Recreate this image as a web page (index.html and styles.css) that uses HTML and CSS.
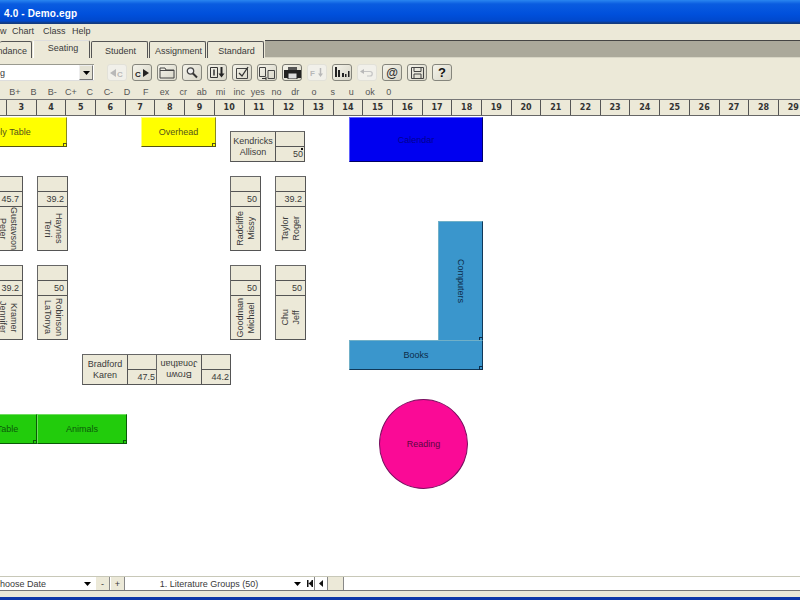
FILE: index.html
```html
<!DOCTYPE html>
<html lang="en">
<head>
<meta charset="utf-8">
<title>Demo.egp</title>
<link rel="stylesheet" href="styles.css">
</head>
<body>
<div class="app">
  <header class="titlebar"><span class="title">4.0 - Demo.egp</span></header>
  <nav class="menubar"><span class="m-view">w</span><span class="m-chart">Chart</span><span class="m-class">Class</span><span class="m-help">Help</span></nav>
  <div class="tabs">
    <span class="tab tab-first">ndance</span>
    <span class="tab tab-active">Seating</span>
    <span class="tab">Student</span>
    <span class="tab">Assignment</span>
    <span class="tab">Standard</span>
    <span class="tabfill"></span>
  </div>
  <div class="toolbar">
    <div class="combo combo-top"><span class="combo-text">g</span><span class="drop"><svg width="7" height="4" viewBox="0 0 7 4"><path d="M0 0h7L3.500 4z"/></svg></span></div>
    <div class="tools">
      <button class="tool off"><svg width="16" height="10" viewBox="0 0 16 10"><path d="M1 5l6-4v8z" fill="#b8b8b8"/><text x="8" y="8.500" class="ic-t ic-off">C</text></svg></button>
      <button class="tool"><svg width="16" height="10" viewBox="0 0 16 10"><text x="1" y="8.500" class="ic-t">C</text><path d="M9 1l6 4-6 4z" fill="#222"/></svg></button>
      <button class="tool"><svg width="16" height="13" viewBox="0 0 16 13"><path d="M1 12V2h5l1 2h8v8z" fill="none" stroke="#444"/><path d="M1 4.500h14" stroke="#444"/></svg></button>
      <button class="tool"><svg width="14" height="13" viewBox="0 0 14 13"><circle cx="5.500" cy="5" r="3.200" fill="#eee" stroke="#444" stroke-width="1.300"/><path d="M8 7.500l4 4" stroke="#333" stroke-width="2"/></svg></button>
      <button class="tool"><svg width="16" height="13" viewBox="0 0 16 13"><path d="M1.500 1.500h7v10h-7z" fill="none" stroke="#333"/><path d="M5 3.500v6" stroke="#333" stroke-width="1.500"/><path d="M12.500 1v7" stroke="#222" stroke-width="2"/><path d="M9.500 7.500h6l-3 4z" fill="#222"/></svg></button>
      <button class="tool"><svg width="15" height="14" viewBox="0 0 15 14"><path d="M1.500 2.500h11v10h-11z" fill="none" stroke="#444"/><path d="M4 7l3 3 6-9" fill="none" stroke="#333" stroke-width="1.300"/></svg></button>
      <button class="tool"><svg width="18" height="14" viewBox="0 0 18 14"><path d="M1.500 1.500h6v9h-6zM10 4.500h6.500v8H10z" fill="none" stroke="#444"/><path d="M4 12.500h4M8 11v3" stroke="#333"/></svg></button>
      <button class="tool strong"><svg width="17" height="12" viewBox="0 0 17 12"><path d="M4 0h9v3H4z" fill="#555"/><path d="M0 3h17v8H0z" fill="#222"/><path d="M4 6h9v6H4z" fill="#ddd" stroke="#222"/></svg></button>
      <button class="tool off"><svg width="14" height="11" viewBox="0 0 14 11"><text x="0" y="9" class="ic-t ic-off">F</text><path d="M10.500 1v6" stroke="#b8b8b8" stroke-width="1.500"/><path d="M8 6.500h5L10.500 10z" fill="#b8b8b8"/></svg></button>
      <button class="tool"><svg width="16" height="11" viewBox="0 0 16 11"><path d="M1 0h2v10H1zM4 3h2v7H4zM8 6h2v4H8zM11 7h1.500v3H11zM14 4h1.500v6H14z" fill="#222"/></svg></button>
      <button class="tool off"><svg width="15" height="9" viewBox="0 0 15 9"><path d="M3 3.500h7c3 0 3 4.500 0 4.500H7" fill="none" stroke="#c4c4c4" stroke-width="1.200"/><path d="M0 3.500L4 1v5z" fill="#b8b8b8"/></svg></button>
      <button class="tool"><span class="glyph">@</span></button>
      <button class="tool"><svg width="15" height="14" viewBox="0 0 15 14"><path d="M1.500 1.500h12v11h-12z" fill="none" stroke="#444"/><path d="M4 1.500h7v4H4zM4 8h7v4.500H4z" fill="none" stroke="#444"/></svg></button>
      <button class="tool"><span class="glyph glyph-b">?</span></button>
    </div>
  </div>
  <div class="marks"><span>B+</span><span>B</span><span>B-</span><span>C+</span><span>C</span><span>C-</span><span>D</span><span>F</span><span>ex</span><span>cr</span><span>ab</span><span>mi</span><span>inc</span><span>yes</span><span>no</span><span>dr</span><span>o</span><span>s</span><span>u</span><span>ok</span><span>0</span></div>
  <div class="ruler"><span class="cell cell-first"></span><span class="cell">3</span><span class="cell">4</span><span class="cell">5</span><span class="cell">6</span><span class="cell">7</span><span class="cell">8</span><span class="cell">9</span><span class="cell">10</span><span class="cell">11</span><span class="cell">12</span><span class="cell">13</span><span class="cell">14</span><span class="cell">15</span><span class="cell">16</span><span class="cell">17</span><span class="cell">18</span><span class="cell">19</span><span class="cell">20</span><span class="cell">21</span><span class="cell">22</span><span class="cell">23</span><span class="cell">24</span><span class="cell">25</span><span class="cell">26</span><span class="cell">27</span><span class="cell">28</span><span class="cell">29</span></div>
  <main class="canvas">
    <div class="block yellow b-assembly"><span class="clip-r">ably Table</span><i class="grip"></i></div>
    <div class="block yellow b-overhead">Overhead<i class="grip"></i></div>
    <div class="block blue b-calendar">Calendar</div>
    <div class="block teal b-computers"><span class="v-down">Computers</span><i class="grip"></i></div>
    <div class="block teal b-books">Books<i class="grip"></i></div>
    <div class="block green b-table"><span class="clip-r">Table</span><i class="grip"></i></div>
    <div class="block green b-animals">Animals<i class="grip"></i></div>
    <div class="block pink b-reading">Reading</div>

    <div class="desk h d-kendricks"><div class="name">Kendricks<br>Allison</div><div class="side"><div class="blank"></div><div class="val">50<i class="dot"></i></div></div></div>
    <div class="desk h d-bradford"><div class="name">Bradford<br>Karen</div><div class="side"><div class="blank"></div><div class="val">47.5</div></div></div>
    <div class="desk h d-brown"><div class="name flip">Brown<br>Jonathan</div><div class="side"><div class="blank"></div><div class="val">44.2</div></div></div>

    <div class="desk v d-gustavson"><div class="blank"></div><div class="val">45.7</div><div class="name"><span class="v-down">Gustavson<br>Peter</span></div></div>
    <div class="desk v d-haynes"><div class="blank"></div><div class="val">39.2</div><div class="name"><span class="v-down">Haynes<br>Terri</span></div></div>
    <div class="desk v d-kramer"><div class="blank"></div><div class="val">39.2</div><div class="name"><span class="v-down">Kramer<br>Jennifer</span></div></div>
    <div class="desk v d-robinson"><div class="blank"></div><div class="val">50</div><div class="name"><span class="v-down">Robinson<br>LaTonya</span></div></div>
    <div class="desk v d-radcliffe"><div class="blank"></div><div class="val">50</div><div class="name"><span class="v-up">Radcliffe<br>Missy</span></div></div>
    <div class="desk v d-taylor"><div class="blank"></div><div class="val">39.2</div><div class="name"><span class="v-up">Taylor<br>Roger</span></div></div>
    <div class="desk v d-goodman"><div class="blank"></div><div class="val">50</div><div class="name"><span class="v-up">Goodman<br>Michael</span></div></div>
    <div class="desk v d-chu"><div class="blank"></div><div class="val">50</div><div class="name"><span class="v-up">Chu<br>Jeff</span></div></div>
  </main>
  <footer class="statusrow">
    <div class="combo combo-date"><span class="combo-text">hoose Date</span><span class="arrow"><svg width="7" height="4" viewBox="0 0 7 4"><path d="M0 0h7L3.500 4z"/></svg></span></div>
    <span class="step">-</span>
    <span class="step">+</span>
    <div class="combo combo-group"><span class="combo-text centered">1. Literature Groups (50)</span><span class="arrow"><svg width="7" height="4" viewBox="0 0 7 4"><path d="M0 0h7L3.500 4z"/></svg></span></div>
    <span class="nav nav-a"><svg width="6" height="7" viewBox="0 0 6 7"><path d="M0 0h1.500v7H0zM4.500 0H6v7H4.500zM1.500 3.500L4.500 1v5z"/></svg></span>
    <span class="nav nav-b"><svg width="4" height="7" viewBox="0 0 4 7"><path d="M4 0v7L0 3.500z"/></svg></span>
    <span class="nav nav-c"></span>
  </footer>
  <div class="bottomgap"></div>
  <div class="taskbar"></div>
</div>
</body>
</html>
```
FILE: styles.css
```css
* { box-sizing: border-box; }
html, body { margin: 0; padding: 0; }
body { width: 800px; height: 600px; overflow: hidden; font-family: "Liberation Sans", Arial, sans-serif; font-size: 9px; color: #3a3a3a; background: #ece9d8; }
.app { display: flex; flex-direction: column; width: 800px; height: 600px; overflow: hidden; }

.titlebar { height: 24px; flex: none; display: flex; align-items: center; padding: 3px 0 0 4px; background: linear-gradient(#2a86f0 0, #0a5ce0 4px, #0050dc 14px, #0048cc 21px, #123a80 23px); color: #fff; }
.title { font: bold 10px "Liberation Sans", sans-serif; letter-spacing: .15px; }

.menubar { height: 15px; flex: none; display: flex; align-items: center; padding-bottom: 2px; background: #ece9d8; }
.m-view { width: 12px; }
.m-chart { width: 31px; }
.m-class { width: 29px; }

.tabs { height: 19px; flex: none; display: flex; align-items: flex-end; background: #ece9d8; }
.tab { width: 57px; margin-right: 1px; height: 17px; display: flex; align-items: center; justify-content: center; border: 1px solid #555; border-bottom: 0; border-radius: 2px 2px 0 0; background: #ece9d8; padding: 1px 0 0 2px; }
.tab-first { width: 32px; justify-content: flex-end; padding-right: 4px; border-left: 0; }
.tab-active { height: 18px; border-left-color: #fff; border-top-color: #ddd; padding: 0 0 3px 3px; }
.tabfill { flex: 1; height: 18px; background: #aba99b; border-top: 1px solid #444; border-bottom: 1px solid #d8d6c6; }

.toolbar { height: 26px; flex: none; display: flex; align-items: center; padding-top: 3px; background: #ece9d8; }
.combo { display: flex; align-items: center; background: #fff; }
.combo-top { width: 94px; height: 17px; margin-right: 13px; border-top: 1px solid #9a9a90; border-bottom: 1px solid #ddd; }
.combo-text { flex: 1; white-space: nowrap; }
.drop { width: 14px; height: 15px; margin-right: 1px; display: flex; align-items: center; justify-content: center; background: #e4e2d4; border: 1px solid #777; border-top-color: #eee; border-left-color: #eee; }
.tools { display: flex; gap: 5px; }
.tool { width: 20px; height: 17px; padding: 0; display: flex; align-items: center; justify-content: center; background: linear-gradient(135deg, #f4f3ea, #d8d6c8); border: 1px solid #85857c; border-radius: 3px; color: #333; }
.tool.off { background: #f1f0ea; border-color: #e2e1d8; }
.tool.strong { border-color: #77776f; }
.ic-t { font: bold 8px "Liberation Sans", sans-serif; fill: #222; }
.ic-off { fill: #b8b8b8; }
.glyph { font: bold 12px "Liberation Sans", sans-serif; line-height: 1; }
.glyph-b { font-size: 13px; color: #111; }

.marks { height: 15px; flex: none; display: grid; grid-template-columns: repeat(21, 18.700px); padding-left: 5.600px; align-items: center; justify-items: center; background: #ece9d8; color: #555; }

.ruler { height: 17px; flex: none; display: flex; background: #ece9d8; border-top: 1px solid #777; border-bottom: 1px solid #666; overflow: hidden; }
.cell { width: 29.700px; flex: none; display: flex; align-items: center; justify-content: center; border-right: 1.500px solid #555; font: bold 8px "DejaVu Sans", sans-serif; color: #333; }
.cell-first { width: 7px; }

.canvas { flex: 1; min-height: 0; position: relative; background: #fff; overflow: hidden; }
.block { position: absolute; display: flex; align-items: center; justify-content: center; border: 1px solid; font-size: 9px; }
.yellow { background: #ffff00; border-color: #ffff80 #8a8a20 #555510 #ffff80; color: #55551a; }
.blue { background: #0000f0; border-color: #6060ff #000070 #000060 #6060ff; color: #000090; }
.teal { background: #3a96cc; border-color: #70b0c8 #103858 #103858 #70b0c8; color: #0d2c4a; }
.green { background: #22cc0c; border-color: #70dd60 #0a5a08 #0a5a08 #70dd60; color: #0b5a0a; }
.pink { background: #fa0a96; border: 1.500px solid #7a1060; border-radius: 50%; color: #5a0840; }
.grip { position: absolute; right: -1px; bottom: -1px; width: 4px; height: 4px; border: 1px solid currentColor; background: transparent; }
.clip-r { white-space: nowrap; }

.b-assembly { left: -46px; top: 1px; width: 113px; height: 30px; }
.b-overhead { left: 141px; top: 1px; width: 75px; height: 30px; }
.b-calendar { left: 349px; top: 1px; width: 134px; height: 45px; }
.b-computers { left: 438px; top: 105px; width: 45px; height: 120px; }
.b-books { left: 349px; top: 224px; width: 134px; height: 30px; }
.b-table { left: -22px; top: 298px; width: 59px; height: 30px; }
.b-animals { left: 37px; top: 298px; width: 90px; height: 30px; }
.b-reading { left: 379px; top: 283px; width: 89px; height: 90px; }

.desk { position: absolute; background: #ece9d8; border: 1px solid #666; border-right: 1.500px solid #555; border-bottom: 1.500px solid #555; font-size: 9px; color: #3a3a3a; display: flex; line-height: 11px; }
.desk .name { display: flex; align-items: center; justify-content: center; text-align: center; white-space: nowrap; overflow: hidden; }
.desk.h { width: 75px; height: 31px; }
.desk.h .name { width: 45px; flex: none; border-right: 1px solid #555; }
.desk.h .side { flex: 1; display: flex; flex-direction: column; }
.desk.h .blank { flex: 1; border-bottom: 1px solid #555; }
.desk.h .val { flex: 1; display: flex; align-items: flex-end; justify-content: flex-end; padding: 0 1px 1px 0; position: relative; }
.desk.v { flex-direction: column; width: 31px; height: 75px; }
.desk.v .blank { height: 15px; flex: none; border-bottom: 1px solid #555; }
.desk.v .val { height: 15px; flex: none; border-bottom: 1px solid #555; display: flex; align-items: center; justify-content: flex-end; padding-right: 3px; }
.desk.v .name { flex: 1; }
.flip { transform: rotate(180deg); border-right: 0 !important; border-left: 1px solid #555; }
.v-down { writing-mode: vertical-rl; white-space: nowrap; text-align: center; }
.v-up { writing-mode: vertical-rl; transform: rotate(180deg); white-space: nowrap; text-align: center; }
.dot { position: absolute; right: 1px; top: 1px; width: 2px; height: 2px; background: #111; }

.d-kendricks { left: 230px; top: 15px; }
.d-bradford { left: 82px; top: 238px; }
.d-brown { left: 156px; top: 238px; }
.d-gustavson { left: -8px; top: 60px; }
.d-haynes { left: 37px; top: 60px; }
.d-radcliffe { left: 230px; top: 60px; }
.d-taylor { left: 275px; top: 60px; }
.d-kramer { left: -8px; top: 149px; }
.d-robinson { left: 37px; top: 149px; }
.d-goodman { left: 230px; top: 149px; }
.d-chu { left: 275px; top: 149px; }

.statusrow { height: 15px; flex: none; display: flex; background: #fff; border-top: 1px solid #c8c8b8; border-bottom: 1px solid #777; }
.combo-date { width: 95px; }
.combo-group { width: 179px; margin-left: 1px; }
.centered { text-align: center; }
.arrow { width: 10px; display: flex; justify-content: center; margin-right: 3px; }
.step { width: 14px; margin-left: 1px; display: flex; align-items: center; justify-content: center; background: #ece9d8; border-right: 1px solid #888; }
.nav { display: flex; align-items: center; justify-content: center; background: #ece9d8; border-right: 1px solid #888; }
.nav-a { width: 9px; margin-left: 1px; background: #fff; }
.nav-b { width: 13px; background: #fff; }
.nav-c { width: 16px; }
.nav svg { fill: #111; }
.bottomgap { height: 6px; flex: none; background: #ece9d8; }
.taskbar { height: 3px; flex: none; background: #1038a8; }
```
